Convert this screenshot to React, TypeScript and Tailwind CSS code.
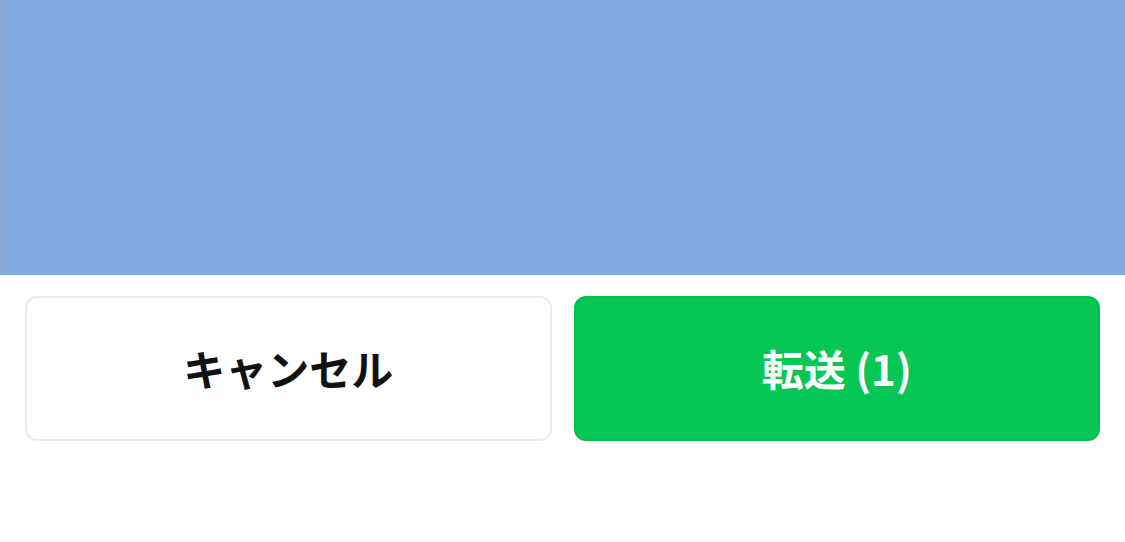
export default function App() {
  return (
    <div className="w-[1125px] h-[542px] bg-white flex flex-col font-['Noto_Sans_CJK_JP',sans-serif]">
      {/* preview area */}
      <div className="h-[275px] w-full bg-[#84abdf] border-l-[3px] border-[#8aa9d2]" />

      {/* action buttons */}
      <div className="flex gap-[22px] px-[25px] pt-[21px]">
        <button className="flex-1 h-[145px] pb-[3px] rounded-[12px] border-2 border-[#ebebeb] bg-white flex items-center justify-center text-[42px] font-bold text-[#111111]">
          キャンセル
        </button>
        <button className="flex-1 h-[145px] pb-[3px] rounded-[12px] border-2 border-[#05bf50] bg-[#06c755] flex items-center justify-center text-[42px] font-bold text-white">
          転送 (1)
        </button>
      </div>
    </div>
  );
}
